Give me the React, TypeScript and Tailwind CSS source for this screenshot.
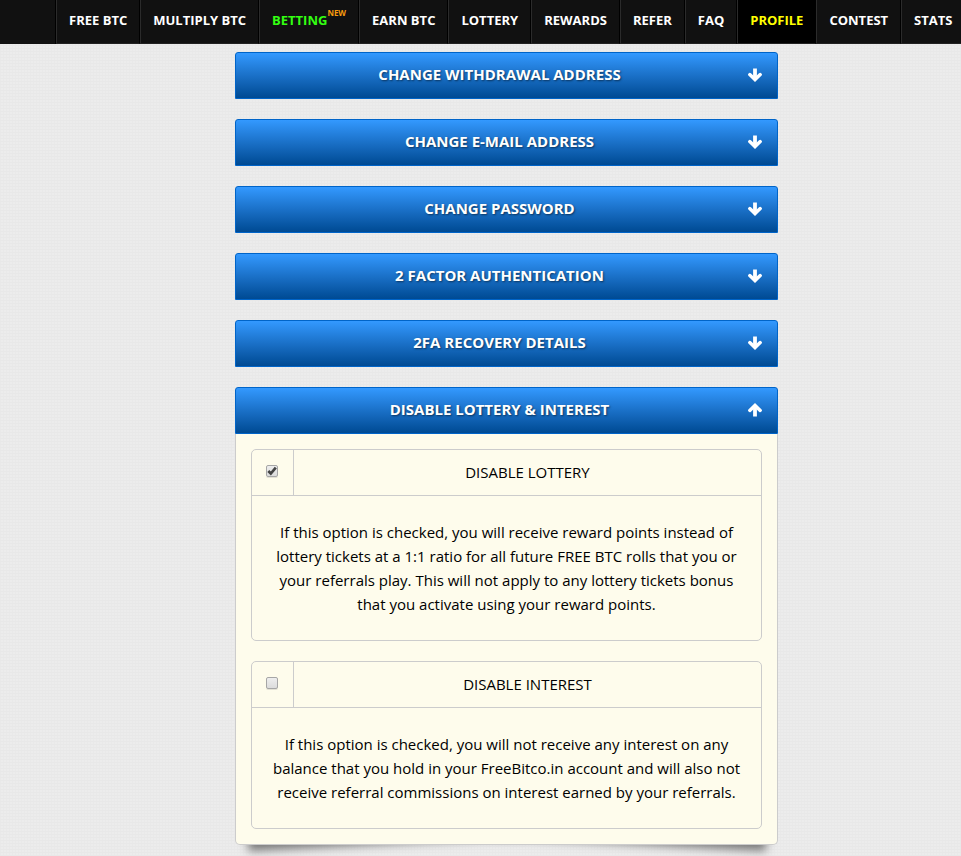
import { useState } from "react";

const navItems = [
  { label: "FREE BTC" },
  { label: "MULTIPLY BTC" },
  { label: "BETTING", badge: "NEW", color: "text-[#33ff11]" },
  { label: "EARN BTC" },
  { label: "LOTTERY" },
  { label: "REWARDS" },
  { label: "REFER" },
  { label: "FAQ" },
  { label: "PROFILE", color: "text-[#ffff00]", active: true },
  { label: "CONTEST" },
  { label: "STATS" },
];

const sections = [
  "CHANGE WITHDRAWAL ADDRESS",
  "CHANGE E-MAIL ADDRESS",
  "CHANGE PASSWORD",
  "2 FACTOR AUTHENTICATION",
  "2FA RECOVERY DETAILS",
  "DISABLE LOTTERY & INTEREST",
];

function Arrow({ up }: { up?: boolean }) {
  return (
    <svg
      viewBox="0 0 14 14"
      className={`w-3.5 h-3.5 shrink-0 ${up ? "rotate-180" : ""}`}
      fill="none"
      stroke="#fff"
      aria-hidden="true"
    >
      <path d="M7 0.5V10" strokeWidth="3.8" />
      <path d="M1.8 6.6L7 11.6L12.2 6.6" strokeWidth="3.4" strokeLinecap="round" />
    </svg>
  );
}

function Option({
  id,
  title,
  text,
  defaultChecked,
}: {
  id: string;
  title: string;
  text: string;
  defaultChecked?: boolean;
}) {
  const [checked, setChecked] = useState(!!defaultChecked);

  return (
    <div className="border border-[#cccccc] rounded-[5px]">
      <div className="flex h-[46px] border-b border-[#cccccc]">
        <div className="w-[42px] shrink-0 border-r border-[#cccccc] pl-3.5 pt-[15px]">
          <span className="relative block w-3 h-3">
            <input
              id={id}
              type="checkbox"
              checked={checked}
              onChange={(e) => setChecked(e.target.checked)}
              className="block appearance-none w-3 h-3 rounded-[2px] border border-[#a6a6a6] bg-linear-to-b from-[#eeeeee] to-[#dcdcdc] shadow-[0_1px_0_#e4e2d5]"
            />
            {checked && (
              <svg viewBox="0 0 12 12" className="absolute inset-0 pointer-events-none" aria-hidden="true">
                <path d="M2.3 6L4.8 8.5L9.8 2.6" fill="none" stroke="#444" strokeWidth="2.7" />
              </svg>
            )}
          </span>
        </div>
        <label htmlFor={id} className="flex-1 text-center leading-[44px]">
          {title}
        </label>
      </div>
      <p className="px-5 py-6 text-center leading-6">{text}</p>
    </div>
  );
}

export default function App() {
  const [open, setOpen] = useState(5);

  return (
    <div className="isolate min-h-screen overflow-hidden bg-[#ececec] bg-[linear-gradient(#e8e8e8_1px,transparent_1px),linear-gradient(90deg,#e9e9e9_1px,transparent_1px)] bg-size-[3px_3px] font-['Open_Sans','Noto_Sans',sans-serif] text-[15px] text-black">
      <nav className="flex h-11 pl-[55px] bg-[#111111] overflow-hidden">
        <ul className="flex shrink-0 border-l border-black text-[13px] font-extrabold text-white whitespace-nowrap">
          {navItems.map((item) => (
            <li
              key={item.label}
              className={`border-l border-l-[#2b2b2b] border-r border-r-black border-b border-b-[#222222] ${item.active ? "bg-black" : ""}`}
            >
              <a href="#" className={`flex items-start px-3 leading-10 font-bold ${item.color ?? ""}`}>
                {item.label}
                {item.badge && (
                  <span className="pt-2 text-[8px] leading-[10px] text-[#f79a0e]">{item.badge}</span>
                )}
              </a>
            </li>
          ))}
        </ul>
      </nav>

      <main className="ml-[235px] mr-4 max-w-[543px] pt-2 pb-3 flex flex-col gap-5">
        {sections.map((title, i) => (
          <section key={title} className="relative">
            <button
              type="button"
              aria-expanded={open === i}
              onClick={() => setOpen(open === i ? -1 : i)}
              className="flex items-center w-full h-[47px] px-[15px] pb-0.5 rounded-t-[3px] border border-[#0064c8] bg-linear-to-b from-[#3399ff] to-[#004a93] text-white font-bold [text-shadow:1px_1px_2px_#00000080]"
            >
              <span className="flex-1">{title}</span>
              <Arrow up={open === i} />
            </button>
            {open === i && i === 5 && (
              <>
                <div className="flex flex-col gap-5 p-[15px] bg-[#fefcec] border border-t-0 border-[#cccccc] rounded-b-[5px]">
                  <Option
                    id="disable-lottery"
                    title="DISABLE LOTTERY"
                    text="If this option is checked, you will receive reward points instead of lottery tickets at a 1:1 ratio for all future FREE BTC rolls that you or your referrals play. This will not apply to any lottery tickets bonus that you activate using your reward points."
                    defaultChecked
                  />
                  <Option
                    id="disable-interest"
                    title="DISABLE INTEREST"
                    text="If this option is checked, you will not receive any interest on any balance that you hold in your FreeBitco.in account and will also not receive referral commissions on interest earned by your referrals."
                  />
                </div>
                <span className="absolute -z-10 left-3 bottom-4 w-1/2 h-5 -rotate-3 shadow-[0_15px_10px_#777]" />
                <span className="absolute -z-10 right-3 bottom-4 w-1/2 h-5 rotate-3 shadow-[0_15px_10px_#777]" />
              </>
            )}
          </section>
        ))}
      </main>
    </div>
  );
}
